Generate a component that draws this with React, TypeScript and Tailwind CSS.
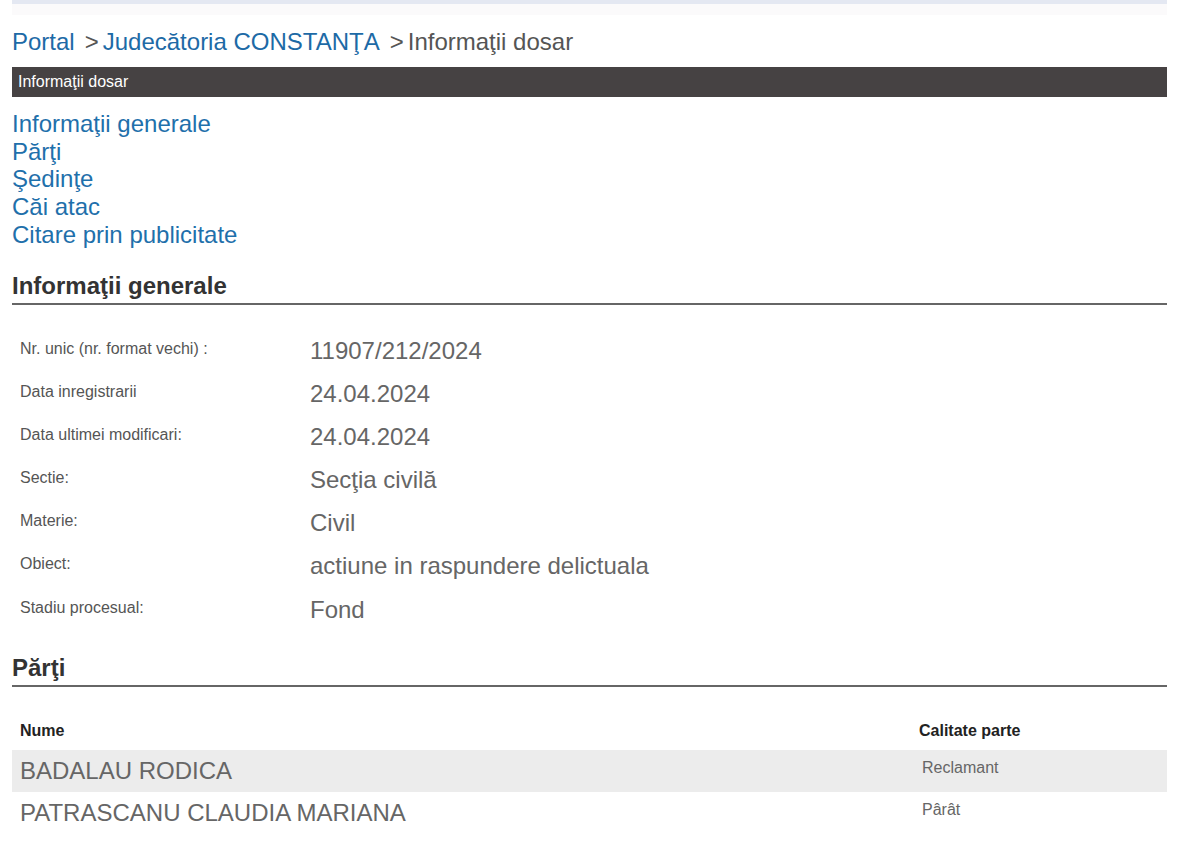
export default function App() {
  const rows: [string, string][] = [
    ["Nr. unic (nr. format vechi) :", "11907/212/2024"],
    ["Data inregistrarii", "24.04.2024"],
    ["Data ultimei modificari:", "24.04.2024"],
    ["Sectie:", "Secţia civilă"],
    ["Materie:", "Civil"],
    ["Obiect:", "actiune in raspundere delictuala"],
    ["Stadiu procesual:", "Fond"],
  ];
  const parti: [string, string][] = [
    ["BADALAU RODICA", "Reclamant"],
    ["PATRASCANU CLAUDIA MARIANA", "Pârât"],
  ];
  return (
    <div className="min-h-[848px] bg-white px-[12px] font-['Liberation_Sans',Arial,sans-serif]">
      <div className="h-[4px] bg-[#e4e8f2]" />
      <div className="h-[11px] bg-[#fbfafb]" />
      <div className="flex h-[52px] items-center pt-[2px] text-[24px] leading-[28px]">
        <span className="text-[#1d6aa6]">Portal</span>
        <span className="ml-[10px] text-[#555]">&gt;</span>
        <span className="ml-[4px] text-[#1d6aa6]">Judecătoria CONSTANŢA</span>
        <span className="ml-[10px] text-[#555]">&gt;</span>
        <span className="ml-[4px] text-[#555]">Informaţii dosar</span>
      </div>
      <div className="flex h-[30px] items-center bg-[#464243] px-[6px] text-[16px] text-white">
        Informaţii dosar
      </div>
      <div className="mt-[13px] flex flex-col text-[24px] leading-[27.7px] text-[#1f70ab]">
        <span>Informaţii generale</span>
        <span>Părţi</span>
        <span>Şedinţe</span>
        <span>Căi atac</span>
        <span>Citare prin publicitate</span>
      </div>
      <div className="mt-[23px] border-b-[2px] border-[#666] pb-[3px] text-[24px] font-bold leading-[28px] text-[#333]">
        Informaţii generale
      </div>
      <div className="mt-[25px] flex flex-col">
        {rows.map(([l, v]) => (
          <div key={l} className="flex h-[43.2px]">
            <div className="w-[298px] pl-[8px] pt-[9px] text-[16px] leading-[20px] text-[#555]">{l}</div>
            <div className="pt-[7px] text-[24px] leading-[28px] text-[#666]">{v}</div>
          </div>
        ))}
      </div>
      <div className="mt-[22px] border-b-[2px] border-[#666] pb-[3px] text-[24px] font-bold leading-[28px] text-[#333]">
        Părţi
      </div>
      <div className="mt-[25px] flex h-[38px] items-center text-[16px] font-bold text-[#222]">
        <div className="flex-1 pl-[8px]">Nume</div>
        <div className="w-[248px]">Calitate parte</div>
      </div>
      {parti.map(([n, c], i) => (
        <div key={n} className={`flex h-[42px] ${i === 0 ? "bg-[#ececec]" : ""}`}>
          <div className="flex-1 pl-[8px] pt-[7px] text-[24px] leading-[28px] text-[#666]">{n}</div>
          <div className="w-[245px] pt-[8px] text-[16px] leading-[20px] text-[#666]">{c}</div>
        </div>
      ))}
    </div>
  );
}
